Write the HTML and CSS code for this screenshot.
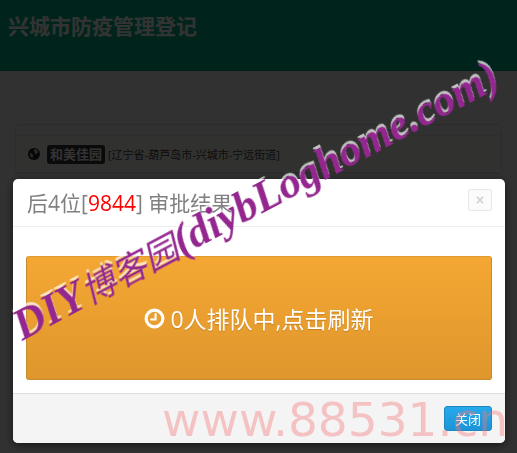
FILE: index.html
```html
<!DOCTYPE html>
<html lang="zh-Hans">
<head>
  <meta charset="UTF-8">
  <meta name="viewport" content="width=device-width, initial-scale=1.0">
  <title>兴城市防疫管理登记</title>
  <link rel="stylesheet" href="styles.css">
</head>
<body>

<header class="navbar">
  <h1 class="brand">兴城市防疫管理登记</h1>
</header>

<main class="container">
  <div class="card">
    <div class="card-heading">
      <svg class="globe" viewBox="0 0 24 24" aria-hidden="true">
        <circle cx="12" cy="12" r="12" fill="#222"/>
        <path d="M13 2l5 2 3 5-3 1-2 3-3-2 1-3-3-2zM3 9l4 2 4 4-2 3 0 3-4-4z" fill="#ccc"/>
      </svg>
      <span class="label">和美佳园</span>
      <span class="address">[辽宁省-葫芦岛市-兴城市-宁远街道]</span>
    </div>
  </div>
</main>

<div class="backdrop">
  <div class="modal" role="dialog" aria-labelledby="modalTitle">
    <div class="modal-header">
      <h2 class="modal-title" id="modalTitle">后4位[<span class="red">9844</span>] 审批结果</h2>
      <button class="close" type="button" aria-label="关闭窗口">
        <svg viewBox="0 0 10 10" width="8" height="8"><path d="M1 1l8 8M9 1l-8 8" stroke="#cfcfcf" stroke-width="2"/></svg>
      </button>
    </div>
    <div class="modal-body">
      <button class="btn-refresh" type="button">
        <svg class="clock" viewBox="0 0 20 20" aria-hidden="true">
          <circle cx="10" cy="10" r="8" fill="none" stroke="#fff" stroke-width="3"/>
          <path d="M11 5v6H6" fill="none" stroke="#fff" stroke-width="2"/>
        </svg>
        <span>0人排队中,点击刷新</span>
      </button>
    </div>
    <div class="modal-footer">
      <button class="btn-close" type="button">关闭</button>
    </div>
  </div>
</div>

<div class="mark mark-blog">DIY<span class="mark-cjk">博客园</span>(diybLoghome.com)</div>
<div class="mark mark-site">www.88531.cn</div>

</body>
</html>
```
FILE: styles.css
```css
* {
  box-sizing: border-box;
}
body {
  margin: 0;
  min-height: 100vh;
  overflow: hidden;
  background: #f5f5f5;
  font-family: "Open Sans", "Noto Sans CJK SC", sans-serif;
}
button {
  font-family: inherit;
  cursor: pointer;
}
.navbar {
  height: 71px;
  padding: 10px 8px;
  background: #00b487;
  border-bottom: 1px solid #00a078;
}
.brand {
  margin: 0;
  color: #fff;
  font-size: 21px;
  font-weight: bold;
  line-height: 32px;
}

/* address card */
.container {
  padding: 53px 15px 0;
}
.card {
  padding-top: 10px;
  border: 1px solid #dcdcdc;
  border-radius: 3px;
}
.card-heading {
  display: flex;
  align-items: center;
  height: 38px;
  padding: 0 12px;
  border-top: 1px solid #e0e0e0;
  border-bottom: 1px solid #e0e0e0;
  background: #f5f5ee;
}
.globe {
  width: 12px;
  height: 12px;
  margin-right: 7px;
}
.label {
  padding: 0 3px;
  border-radius: 3px;
  background: #333;
  color: #fff;
  font-size: 13px;
  font-weight: bold;
  line-height: 19px;
}
.address {
  margin-left: 3px;
  color: #444;
  font-size: 11px;
}

/* modal */
.backdrop {
  position: fixed;
  inset: 0;
  padding: 179px 12px 10px 13px;
  background: rgba(0, 0, 0, 0.8);
}
.modal {
  overflow: hidden;
  border-radius: 5px;
  background: #fff;
  box-shadow: 0 2px 8px rgba(0, 0, 0, 0.6);
}
.modal-header {
  display: flex;
  justify-content: space-between;
  align-items: center;
  height: 48px;
  padding: 0 13px 0 14px;
  border-bottom: 1px solid #eee;
}
.modal-title {
  margin: 0;
  color: #808080;
  font-size: 21px;
  font-weight: normal;
  line-height: 30px;
}
.red {
  color: #f00;
}
.close {
  display: flex;
  align-items: center;
  justify-content: center;
  width: 24px;
  height: 22px;
  margin-bottom: 6px;
  padding: 0;
  border: 1px solid #e8e8e8;
  border-radius: 2px;
  background: #fbfbfb;
}
.modal-body {
  padding: 29px 13px 13px;
}
.btn-refresh {
  display: flex;
  align-items: center;
  justify-content: center;
  gap: 5px;
  width: 100%;
  height: 124px;
  border: 1px solid #c98b30;
  border-top-color: #e09a2e;
  border-radius: 3px;
  background: linear-gradient(#f4a733, #df962c);
  color: #fff;
  font-size: 23px;
  text-shadow: 0 1px 1px rgba(120, 70, 0, 0.3);
}
.clock {
  width: 21px;
  height: 21px;
}
.modal-footer {
  display: flex;
  justify-content: flex-end;
  padding: 12px 13px;
  border-top: 1px solid #ddd;
  background: #f4f4f4;
}
.btn-close {
  height: 25px;
  padding: 0 10px;
  border: 1px solid #1c87c0;
  border-radius: 3px;
  background: linear-gradient(#27a9ec, #1b94d8);
  color: #fff;
  font-size: 13px;
}

/* watermarks */
.mark {
  position: fixed;
  white-space: nowrap;
  line-height: 1;
  pointer-events: none;
}
.mark-blog {
  left: 26px;
  bottom: 105px;
  color: #93278f;
  font-family: "Liberation Serif", "Noto Sans CJK SC", serif;
  font-size: 44px;
  font-style: italic;
  font-weight: bold;
  text-shadow: 1px -3px 0 rgba(255, 255, 255, 0.7);
  transform: rotate(-28deg);
  transform-origin: left bottom;
}
.mark-cjk {
  font-size: 35px;
  font-weight: normal;
}
.mark-site {
  left: 162px;
  bottom: 10px;
  color: rgba(244, 120, 120, 0.4);
  font-family: "DejaVu Sans", sans-serif;
  font-size: 47px;
}
```
